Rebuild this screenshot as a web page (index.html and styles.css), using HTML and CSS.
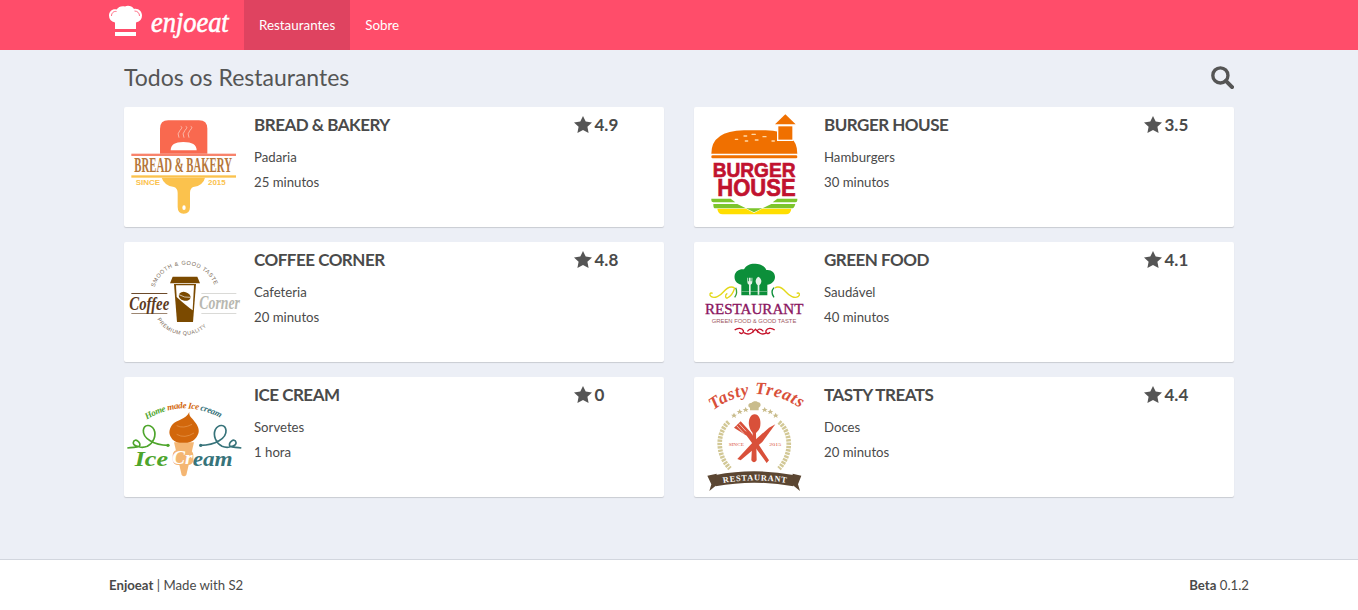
FILE: index.html
```html
<!DOCTYPE html>
<html lang="pt-BR">
<head>
<meta charset="utf-8">
<title>Enjoeat</title>
<link rel="stylesheet" href="styles.css">
</head>
<body>
<header class="topbar">
  <div class="wrap topbar-inner">
    <a class="brand" href="#">
      <svg class="hat" viewBox="0 0 34 34" aria-hidden="true">
        <path d="M6 24V17.500C2 16.500 0 14 0 10.500C0 6.500 3.500 3.500 7.500 4.500C9.500 1.500 13 0.500 16 1.500C19 0 23 1 25 4C29.500 3 33 6.500 33 10.500C33 14 31 16.500 27 17.500V24Z" fill="#fff"/>
        <path d="M2.500 11C2.500 8 4.500 6 7.500 6.500" fill="none" stroke="#ff4d6a" stroke-width="0.800"/>
        <path d="M30.500 11C30.500 8 28.500 6 25.500 6" fill="none" stroke="#ff4d6a" stroke-width="0.800"/>
        <rect x="6" y="27" width="21" height="4" fill="#fff"/>
      </svg>
      <svg class="wordmark" viewBox="0 0 80 46" aria-hidden="false">
        <text transform="translate(1 29) scale(0.88 1)" class="wordmark-text">enjoeat</text>
      </svg>
    </a>
    <nav class="nav">
      <a class="nav-link active" href="#">Restaurantes</a>
      <a class="nav-link" href="#">Sobre</a>
    </nav>
  </div>
</header>

<main class="content">
  <div class="heading">
    <h1>Todos os Restaurantes</h1>
    <svg class="search" viewBox="0 0 24 24" aria-hidden="true">
      <circle cx="9.800" cy="9.800" r="7.900" fill="none" stroke="#555" stroke-width="3.500"/>
      <path d="M15.500 15.500L22 22" stroke="#555" stroke-width="4.200" stroke-linecap="round"/>
    </svg>
  </div>

  <section class="grid">
    <article class="card">
      <div class="logo">
        <svg viewBox="0 0 390 360">
          <path d="M108 140V65Q108 40 133 40H225Q250 40 250 65V140Z" fill="#f9694f"/>
          <path d="M165 92Q158 80 168 70T170 58M180 92Q173 80 183 70T185 58M195 92Q188 80 198 70T200 58" fill="none" stroke="#fbb7a8" stroke-width="3"/>
          <path d="M140 130Q140 105 178 105Q218 105 218 130Z" fill="#fff"/>
          <rect x="22" y="140" width="314" height="7" fill="#f8836c"/>
          <text transform="translate(31 195) scale(0.538 1)" font-family="Liberation Serif" font-weight="700" font-size="60" fill="#b5763a">BREAD &amp; BAKERY</text>
          <rect x="22" y="205" width="314" height="7" fill="#fbc24d"/>
          <path d="M113 212H243Q238 235 208 240Q198 244 198 258V300Q198 320 179 320Q161 320 161 300V258Q161 244 150 240Q120 235 113 212Z" fill="#fbc24d"/>
          <ellipse cx="180" cy="302" rx="5" ry="7" fill="#fff"/>
          <text x="35" y="235" textLength="73" lengthAdjust="spacingAndGlyphs" font-family="Liberation Sans" font-weight="700" font-size="22" fill="#fbc24d">SINCE</text>
          <text x="252" y="235" textLength="53" lengthAdjust="spacingAndGlyphs" font-family="Liberation Sans" font-weight="700" font-size="22" fill="#fbc24d">2015</text>
        </svg>
      </div>
      <div class="info">
        <h2>BREAD &amp; BAKERY</h2>
        <p>Padaria</p>
        <p>25 minutos</p>
      </div>
      <div class="rating"><svg class="star" viewBox="0 0 18 17"><path d="M9 0L11.700 5.600L18 6.500L13.400 10.800L14.600 17L9 14L3.400 17L4.600 10.800L0 6.500L6.300 5.600Z"/></svg><span>4.9</span></div>
    </article>

    <article class="card">
      <div class="logo">
        <svg viewBox="0 0 390 360">
          <path d="M52 140Q52 72 150 70H215Q310 72 310 140Z" fill="#f07000"/>
          <rect x="251" y="56" width="46" height="44" fill="#f07000" stroke="#fff" stroke-width="4"/>
          <path d="M243 52L274 22L305 52Z" fill="#f07000"/>
          <rect x="52" y="145" width="258" height="9" rx="4" fill="#f07000"/>
          <g fill="#ffd9a8">
            <rect x="122" y="95" width="11" height="4" rx="2"/><rect x="148" y="85" width="12" height="4" rx="2"/><rect x="172" y="80" width="14" height="4" rx="2"/><rect x="205" y="87" width="13" height="4" rx="2"/><rect x="152" y="100" width="11" height="4" rx="2"/><rect x="182" y="97" width="12" height="4" rx="2"/><rect x="232" y="100" width="11" height="4" rx="2"/>
          </g>
          <text transform="translate(56 209) scale(0.912 1)" font-family="Liberation Sans" font-weight="700" font-size="63" fill="#c1122f" stroke="#c1122f" stroke-width="2">BURGER</text>
          <text transform="translate(70 266) scale(0.944 1)" font-family="Liberation Sans" font-weight="700" font-size="70" fill="#c1122f" stroke="#c1122f" stroke-width="2">HOUSE</text>
          <path d="M52 275H110L124 286H58Q52 286 52 280ZM250 275H310V280Q310 286 304 286H236Z" fill="#7cc52c"/>
          <path d="M58 291H130L180 316L232 291H304Q300 304 296 304H62Q58 304 58 291Z" fill="#7cc52c"/>
          <path d="M70 305H156L180 318L204 305H292Q290 322 276 322H86Q72 322 70 305Z" fill="#ffde00"/>
        </svg>
      </div>
      <div class="info">
        <h2>BURGER HOUSE</h2>
        <p>Hamburgers</p>
        <p>30 minutos</p>
      </div>
      <div class="rating"><svg class="star" viewBox="0 0 18 17"><path d="M9 0L11.700 5.600L18 6.500L13.400 10.800L14.600 17L9 14L3.400 17L4.600 10.800L0 6.500L6.300 5.600Z"/></svg><span>3.5</span></div>
    </article>

    <article class="card">
      <div class="logo">
        <svg viewBox="0 0 390 360">
          <defs>
            <path id="coffee-top" d="M92 136A95 95 0 0 1 274 136"/>
            <path id="coffee-bottom" d="M100 232A95 95 0 0 0 264 232"/>
          </defs>
          <text font-family="Liberation Sans" font-size="17" fill="#7a6a58" letter-spacing="1.700"><textPath href="#coffee-top">SMOOTH &amp; GOOD TASTE</textPath></text>
          <text font-family="Liberation Sans" font-size="16" fill="#7a6a58" letter-spacing="1.600"><textPath href="#coffee-bottom">PREMIUM QUALITY</textPath></text>
          <path d="M146 104H220L228 124H138Z" fill="#7b4a00"/>
          <path d="M150 126H216L207 240H159Z" fill="#7b4a00"/>
          <path d="M156 130H210L206 205Q185 190 158 165Z" fill="#fff"/>
          <ellipse cx="182" cy="163" rx="18" ry="13" transform="rotate(15 182 163)" fill="#7b4a00"/>
          <path d="M165 158Q182 168 199 166" stroke="#fff" stroke-width="2" fill="none"/>
          <rect x="22" y="153" width="108" height="3" fill="#6c4a2a"/>
          <rect x="22" y="214" width="108" height="2" fill="#6c4a2a"/>
          <rect x="232" y="153" width="105" height="2" fill="#c8c8c4"/>
          <rect x="232" y="214" width="105" height="2" fill="#c8c8c4"/>
          <text transform="translate(16 204) scale(0.79 1)" font-family="Liberation Serif" font-style="italic" font-weight="700" font-size="56" fill="#5c3a1e">Coffee</text>
          <text transform="translate(226 200) scale(0.767 1)" font-family="Liberation Serif" font-style="italic" font-weight="700" font-size="54" fill="#b8b8b0">Corner</text>
        </svg>
      </div>
      <div class="info">
        <h2>COFFEE CORNER</h2>
        <p>Cafeteria</p>
        <p>20 minutos</p>
      </div>
      <div class="rating"><svg class="star" viewBox="0 0 18 17"><path d="M9 0L11.700 5.600L18 6.500L13.400 10.800L14.600 17L9 14L3.400 17L4.600 10.800L0 6.500L6.300 5.600Z"/></svg><span>4.8</span></div>
    </article>

    <article class="card">
      <div class="logo">
        <svg viewBox="0 0 390 360">
          <path d="M142 160V128C125 125 120 112 122 100C124 88 136 80 150 82C155 70 170 64 184 65C198 65 212 72 217 84C232 82 243 92 243 105C243 118 232 127 220 128V160Z" fill="#0c8f3a"/>
          <rect x="142" y="148" width="78" height="2" fill="#8cc79c"/>
          <path d="M160 107V120Q160 126 165 128V158H170V128Q175 126 175 120V107H172.500V118H170V107H165V118H162.500V107Z" fill="#e6f2e8"/>
          <path d="M193 104Q184 110 185 120Q187 128 191 130V158H196V130Q200 128 202 120Q203 110 193 104Z" fill="#e6f2e8"/>
          <path d="M122 138C112 132 100 136 88 150C78 162 62 170 52 164C44 158 48 150 56 154" fill="none" stroke="#e3d81a" stroke-width="4"/>
          <path d="M122 138C118 152 108 164 100 168C94 170 92 158 100 154" fill="none" stroke="#e3d81a" stroke-width="4"/>
          <path d="M242 138C252 132 264 136 276 150C286 162 302 170 312 164C320 158 316 150 308 154" fill="none" stroke="#e3d81a" stroke-width="4"/>
          <path d="M125 137Q132 152 122 166" fill="none" stroke="#3aa03a" stroke-width="4"/>
          <path d="M240 137Q228 150 240 166" fill="none" stroke="#0c8f3a" stroke-width="4"/>
          <text x="33" y="216" textLength="295" lengthAdjust="spacingAndGlyphs" font-family="Liberation Serif" font-weight="400" font-size="44" fill="#8a1560" stroke="#8a1560" stroke-width="1">RESTAURANT</text>
          <text x="53" y="244" textLength="254" lengthAdjust="spacingAndGlyphs" font-family="Liberation Sans" font-size="17" fill="#a0575f">GREEN FOOD &amp; GOOD TASTE</text>
          <path d="M122 264C132 256 144 258 148 266C150 274 140 278 136 270M150 272C165 282 175 272 184 262C194 272 204 282 218 272M242 264C232 256 220 258 216 266C214 274 224 278 228 270" fill="none" stroke="#c5122a" stroke-width="4"/>
          <path d="M160 268C170 256 182 262 176 272M208 268C198 256 186 262 192 272" fill="none" stroke="#c5122a" stroke-width="3.500"/>
        </svg>
      </div>
      <div class="info">
        <h2>GREEN FOOD</h2>
        <p>Saudável</p>
        <p>40 minutos</p>
      </div>
      <div class="rating"><svg class="star" viewBox="0 0 18 17"><path d="M9 0L11.700 5.600L18 6.500L13.400 10.800L14.600 17L9 14L3.400 17L4.600 10.800L0 6.500L6.300 5.600Z"/></svg><span>4.1</span></div>
    </article>

    <article class="card">
      <div class="logo">
        <svg viewBox="0 0 390 360">
          <defs>
            <path id="ice-arc" d="M68 128Q180 60 298 128"/>
          </defs>
          <text font-family="Liberation Serif" font-style="italic" font-weight="700" font-size="27"><textPath href="#ice-arc" textLength="232"><tspan fill="#4ea52c">Home </tspan><tspan fill="#d2670c">made </tspan><tspan fill="#d2670c">Ice </tspan><tspan fill="#37737a">cream</tspan></textPath></text>
          <path d="M150 196L173 294Q180 302 187 294L210 196Z" fill="#f4b673"/>
          <rect x="146" y="218" width="62" height="46" rx="16" fill="#f4b673"/>
          <path d="M196 105C194 118 204 122 212 134C222 146 228 160 222 172C216 186 206 196 190 197C172 198 150 198 142 182C132 170 136 154 146 142C158 128 186 128 196 105Z" fill="#d2670c"/>
          <path d="M158 172Q182 186 210 168M158 146Q178 156 204 142" fill="none" stroke="#e89b55" stroke-width="2"/>
          <path d="M10 213C30 210 38 212 46 208C54 198 32 180 28 196C26 206 50 216 70 208C88 198 98 176 90 158C80 140 60 142 58 160C56 184 90 204 132 205" fill="none" stroke="#4ea52c" stroke-width="5"/>
          <circle cx="132" cy="205" r="5" fill="#4ea52c"/>
          <path d="M352 213C334 210 326 212 318 208C310 198 332 180 336 196C338 206 314 216 294 208C276 198 266 176 274 158C284 140 304 142 306 160C308 184 274 204 230 205" fill="none" stroke="#37737a" stroke-width="5"/>
          <circle cx="230" cy="205" r="5" fill="#37737a"/>
          <text x="32" y="267" textLength="100" lengthAdjust="spacingAndGlyphs" font-family="Liberation Serif" font-style="italic" font-weight="700" font-size="66" fill="#4ea52c">Ice</text>
          <text x="144" y="262" textLength="62" lengthAdjust="spacingAndGlyphs" font-family="Liberation Serif" font-style="italic" font-weight="700" font-size="58" fill="#fff">Cr</text>
          <text x="206" y="266" textLength="120" lengthAdjust="spacingAndGlyphs" font-family="Liberation Serif" font-style="italic" font-weight="700" font-size="60" fill="#37737a">eam</text>
        </svg>
      </div>
      <div class="info">
        <h2>ICE CREAM</h2>
        <p>Sorvetes</p>
        <p>1 hora</p>
      </div>
      <div class="rating"><svg class="star" viewBox="0 0 18 17"><path d="M9 0L11.700 5.600L18 6.500L13.400 10.800L14.600 17L9 14L3.400 17L4.600 10.800L0 6.500L6.300 5.600Z"/></svg><span>0</span></div>
    </article>

    <article class="card">
      <div class="logo">
        <svg viewBox="0 0 390 360">
          <defs>
            <path id="tasty-arc" d="M58 100Q185 6 322 95"/>
            <path id="rest-arc" d="M88 318Q180 302 278 318"/>
          </defs>
          <text font-family="Liberation Serif" font-style="italic" font-weight="700" font-size="52" fill="#d9503a"><textPath href="#tasty-arc" textLength="280">Tasty Treats</textPath></text>
          <path d="M168 92C160 90 162 76 172 78C178 70 190 72 192 76C200 74 204 88 194 92V100H168Z" fill="#c9bc8c"/>
          <g fill="#c9bc8c">
            <path d="M120 107l3 6 6 0-5 4 2 6-6-4-6 4 2-6-5-4 6 0z"/>
            <path d="M137 96l3 6 6 0-5 4 2 6-6-4-6 4 2-6-5-4 6 0z"/>
            <path d="M155 90l3 6 6 0-5 4 2 6-6-4-6 4 2-6-5-4 6 0z"/>
            <path d="M212 90l3 6 6 0-5 4 2 6-6-4-6 4 2-6-5-4 6 0z"/>
            <path d="M229 96l3 6 6 0-5 4 2 6-6-4-6 4 2-6-5-4 6 0z"/>
            <path d="M245 107l3 6 6 0-5 4 2 6-6-4-6 4 2-6-5-4 6 0z"/>
          </g>
          <path d="M104 135C70 165 65 230 108 275" fill="none" stroke="#d2c896" stroke-width="14" stroke-dasharray="7 3"/>
          <path d="M255 135C292 165 296 230 255 275" fill="none" stroke="#d2c896" stroke-width="14" stroke-dasharray="7 3"/>
          <path d="M182 112C168 112 163 130 165 145C167 158 173 164 176 168L172 250Q180 262 188 250L186 168C190 164 198 158 199 145C201 130 196 112 182 112Z" fill="#d9503a"/>
          <path d="M120 152L140 133L170 166L225 250L218 258L158 176Z" fill="#d9503a"/>
          <path d="M244 142L205 195L140 250L130 246L180 192L225 152Z" fill="#d9503a"/>
          <path d="M128 146L150 170M135 140L156 163" stroke="#fff" stroke-width="2"/>
          <text x="104" y="206" textLength="46" lengthAdjust="spacingAndGlyphs" font-family="Liberation Serif" font-size="14" fill="#d9503a">SINCE</text>
          <text x="226" y="206" textLength="36" lengthAdjust="spacingAndGlyphs" font-family="Liberation Serif" font-size="14" fill="#d9503a">2015</text>
          <path d="M40 296L68 290V324L46 342L52 322Z" fill="#5b4632"/>
          <path d="M322 296L296 290V324L318 342L312 322Z" fill="#5b4632"/>
          <path d="M65 294Q180 272 298 294V328Q180 306 65 328Z" fill="#5b4632"/>
          <text font-family="Liberation Serif" font-weight="700" font-size="25" fill="#fff"><textPath href="#rest-arc" textLength="190">RESTAURANT</textPath></text>
        </svg>
      </div>
      <div class="info">
        <h2>TASTY TREATS</h2>
        <p>Doces</p>
        <p>20 minutos</p>
      </div>
      <div class="rating"><svg class="star" viewBox="0 0 18 17"><path d="M9 0L11.700 5.600L18 6.500L13.400 10.800L14.600 17L9 14L3.400 17L4.600 10.800L0 6.500L6.300 5.600Z"/></svg><span>4.4</span></div>
    </article>
  </section>
</main>

<footer class="footer">
  <div class="wrap footer-inner">
    <span><strong>Enjoeat</strong> | Made with S2</span>
    <span><strong>Beta</strong> 0.1.2</span>
  </div>
</footer>
</body>
</html>
```
FILE: styles.css
```css
* { box-sizing: border-box; }
html, body { height: 100%; }
body {
  margin: 0;
  display: flex;
  flex-direction: column;
  min-height: 610px;
  background: #eceff6;
  color: #4a4a4a;
  font-family: "Lato", "Liberation Sans", sans-serif;
  font-size: 14px;
  overflow: hidden;
}
a { text-decoration: none; color: inherit; }
.wrap { width: 1140px; margin: 0 auto; }
.topbar { height: 50px; background: #ff4d6a; flex: none; }
.topbar-inner { display: flex; height: 50px; }
.brand { width: 135px; display: flex; align-items: flex-start; gap: 7px; }
.hat { width: 34px; height: 34px; margin-top: 5px; }
.wordmark { width: 80px; height: 46px; margin-top: 3px; }
.wordmark-text {
  font-family: "Liberation Serif", serif;
  font-style: italic;
  font-size: 30px;
  fill: #fff;
  stroke: #fff;
  stroke-width: 0.6px;
}
.nav { display: flex; }
.nav-link {
  display: flex;
  align-items: center;
  padding: 0 15px;
  color: #fff;
  font-size: 13.400px;
}
.nav-link.active { background: #df4360; }
.content { flex: 1; width: 1110px; margin: 0 auto; }
.heading {
  height: 57px;
  display: flex;
  justify-content: space-between;
  align-items: center;
  padding-bottom: 3px;
}
.heading h1 {
  margin: 0;
  font-size: 23px;
  font-weight: 400;
  color: #555;
}
.search { width: 23px; height: 23px; margin-top: 1px; }
.grid {
  display: grid;
  grid-template-columns: 540px 540px;
  grid-auto-rows: 120px;
  gap: 15px 30px;
}
.card {
  display: flex;
  background: #fff;
  border-radius: 2px;
  box-shadow: 0 1px 1px rgba(0, 0, 0, 0.15);
}
.logo { width: 130px; height: 120px; flex: none; }
.logo svg { display: block; width: 130px; height: 120px; }
.info { width: 320px; flex: none; }
.info h2 {
  margin: 8px 0 10px;
  font-size: 17px;
  letter-spacing: -0.5px;
  line-height: 20px;
  font-weight: 700;
}
.info p {
  margin: 0;
  height: 25px;
  line-height: 25px;
  font-size: 13.200px;
}
.rating {
  display: flex;
  align-items: flex-start;
  gap: 2.500px;
  padding-top: 8px;
  font-size: 17px;
  line-height: 20px;
  font-weight: 700;
}
.star { width: 18px; height: 17px; margin-top: 1px; fill: #555; }
.footer {
  flex: none;
  height: 51px;
  background: #fff;
  border-top: 1px solid #d2d6de;
}
.footer-inner {
  display: flex;
  justify-content: space-between;
  align-items: center;
  height: 50px;
  font-size: 13.200px;
}
```
